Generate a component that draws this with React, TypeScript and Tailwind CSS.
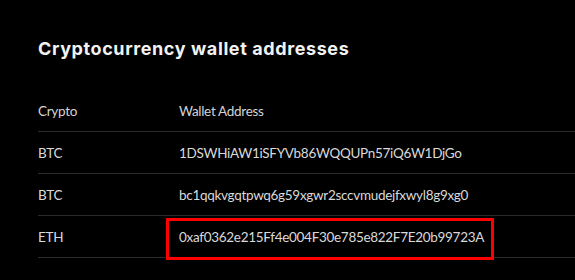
import React from 'react';

const WALLETS = [
  { coin: 'BTC', address: '1DSWHiAW1iSFYVb86WQQUPn57iQ6W1DjGo', marked: false },
  { coin: 'BTC', address: 'bc1qqkvgqtpwq6g59xgwr2sccvmudejfxwyl8g9xg0', marked: false },
  { coin: 'ETH', address: '0xaf0362e215Ff4e004F30e785e822F7E20b99723A', marked: true },
];

export default function App() {
  return (
    <div className="w-[575px] h-[280px] overflow-hidden bg-black pl-[38px] pt-[37px]">
      <h2
        className="text-[18px] leading-[24px] font-bold text-[#f2f2f2] tracking-[0.6px]"
        style={{ fontFamily: '"Inter", "Liberation Sans", sans-serif' }}
      >
        Cryptocurrency wallet addresses
      </h2>

      <div
        className="mt-[29px] w-[537px] text-[13.5px] leading-[20px] tracking-[-0.3px]"
        style={{ fontFamily: '"Lato", "Liberation Sans", sans-serif' }}
      >
        {/* header row */}
        <div className="flex h-[42px] items-center border-b border-[#2b2b2b] text-[#d4d4d4]">
          <div className="w-[141px]">Crypto</div>
          <div>Wallet Address</div>
        </div>

        {WALLETS.map((w, i) => (
          <div key={i} className="flex h-[42px] items-center border-b border-[#2b2b2b] text-[#d9d9d9]">
            <div className="w-[141px]">{w.coin}</div>
            <div className="relative">
              {w.address}
              {w.marked && (
                <div className="absolute left-[-13px] right-[-10px] top-[-9px] h-[42px] border-[3px] border-[#ff0000]" />
              )}
            </div>
          </div>
        ))}
      </div>
    </div>
  );
}
